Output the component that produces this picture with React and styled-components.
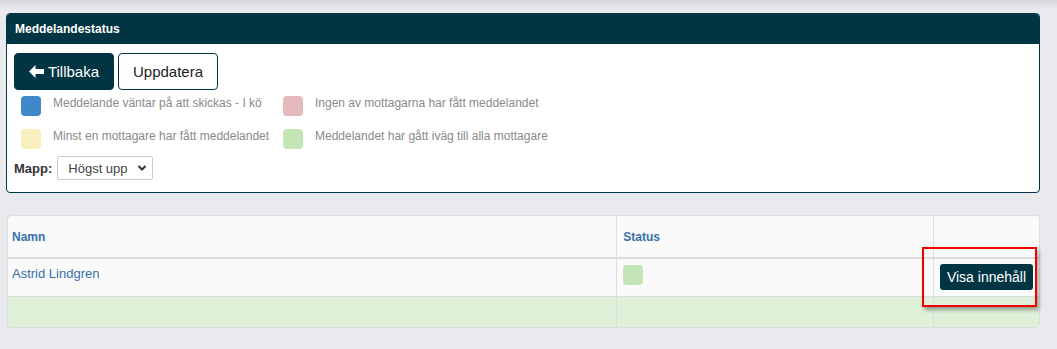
import React from 'react';
import styled, { createGlobalStyle } from 'styled-components';

const GlobalStyle = createGlobalStyle`
  body {
    margin: 0;
    background: linear-gradient(#d6d6d9, #e9eaee 10px) no-repeat, #e9eaee;
    font-family: "Liberation Sans", Arial, sans-serif;
  }
`;

const Page = styled.div`
  padding: 13px 17px 0 6px;
`;

const Panel = styled.section`
  border: 1px solid #023543;
  border-radius: 4px;
  background: #fff;
  overflow: hidden;
`;

const PanelHeader = styled.div`
  background: #023543;
  color: #fff;
  font-size: 12px;
  font-weight: bold;
  height: 30px;
  line-height: 30px;
  padding-left: 8px;
`;

const PanelBody = styled.div`
  padding: 9px 7px 12px;
`;

const Buttons = styled.div`
  display: flex;
  gap: 4px;
`;

const Button = styled.button`
  width: 100px;
  height: 37px;
  border-radius: 4px;
  font-family: inherit;
  font-size: 15px;
  display: flex;
  align-items: center;
  justify-content: center;
  gap: 4px;
  border: 1px solid #023543;
  background: ${({ $primary }) => ($primary ? '#023543' : '#fff')};
  color: ${({ $primary }) => ($primary ? '#fff' : '#222')};
  padding: 0;
`;

const Legend = styled.div`
  display: grid;
  grid-template-columns: 262px auto;
  row-gap: 13px;
  padding: 6px 0 0 7px;
`;

const LegendItem = styled.div`
  display: flex;
  align-items: flex-start;
  gap: 12px;
  font-size: 12px;
  color: #8a8a8a;
  line-height: 14px;
`;

const Swatch = styled.span`
  flex: none;
  display: block;
  width: 20px;
  height: 20px;
  border-radius: 4px;
  background: ${({ $color }) => $color};
`;

const FolderRow = styled.div`
  display: flex;
  align-items: center;
  gap: 5px;
  margin-top: 7px;
  font-size: 13px;
  font-weight: bold;
  color: #333;
`;

const SelectBox = styled.div`
  width: 96px;
  height: 24px;
  box-sizing: border-box;
  border: 1px solid #ccc;
  border-radius: 2px;
  display: flex;
  align-items: center;
  justify-content: space-between;
  padding: 0 5px 0 10px;
  font-size: 13px;
  font-weight: normal;
  color: #444;
`;

const TableWrap = styled.div`
  margin: 22px 0 0 1px;
  border: 1px solid #ddd;
  border-radius: 4px;
  background: #fafafa;
`;

const Table = styled.table`
  width: 100%;
  border-collapse: collapse;
  font-size: 13px;
`;

const Th = styled.th`
  text-align: left;
  color: #3871ab;
  font-size: 12px;
  font-weight: bold;
  height: 41px;
  padding: 0 5px 0 ${({ $first }) => ($first ? '4px' : '6px')};
  border-bottom: 2px solid #ddd;
  border-left: ${({ $first }) => ($first ? 'none' : '1px solid #ddd')};
  width: ${({ $w }) => $w};
`;

const Td = styled.td`
  vertical-align: top;
  padding: ${({ $pad }) => $pad || '5px 5px'};
  height: ${({ $h }) => $h};
  border-top: 1px solid #ddd;
  border-left: ${({ $first }) => ($first ? 'none' : '1px solid #ddd')};
  background: ${({ $bg }) => $bg || 'transparent'};
  color: #3871ab;
  position: relative;
`;

const Name = styled.span`
  display: block;
  margin-top: 1px;
`;

const ShowButton = styled.button`
  background: #023543;
  color: #fff;
  border: none;
  border-radius: 3px;
  font-family: inherit;
  font-size: 14px;
  height: 26px;
  width: 93px;
  padding: 0;
`;

const Highlight = styled.div`
  position: absolute;
  z-index: 2;
  left: -12px;
  top: -12px;
  width: 115px;
  height: 60px;
  box-sizing: border-box;
  border: 2px solid #e00;
  box-shadow: 2px 3px 4px rgba(0, 0, 0, 0.35);
  pointer-events: none;
`;

const ArrowLeft = () => (
  <svg width="15" height="13" viewBox="0 0 15 13" fill="currentColor">
    <path d="M0 6.5 L6.5 0 L6.5 4 L15 4 L15 9 L6.5 9 L6.5 13 Z" />
  </svg>
);

const Chevron = () => (
  <svg width="10" height="8" viewBox="0 0 10 8">
    <path d="M1.5 2 L5 5.5 L8.5 2" fill="none" stroke="#333" strokeWidth="2" />
  </svg>
);

const legend = [
  { color: '#3f88c9', text: 'Meddelande väntar på att skickas - I kö' },
  { color: '#e4b9bb', text: 'Ingen av mottagarna har fått meddelandet' },
  { color: '#f8efbc', text: 'Minst en mottagare har fått meddelandet' },
  { color: '#c4e6b6', text: 'Meddelandet har gått iväg till alla mottagare' },
];

export default function App() {
  return (
    <Page>
      <GlobalStyle />
      <Panel>
        <PanelHeader>Meddelandestatus</PanelHeader>
        <PanelBody>
          <Buttons>
            <Button $primary>
              <ArrowLeft />
              Tillbaka
            </Button>
            <Button>Uppdatera</Button>
          </Buttons>
          <Legend>
            {legend.map((item) => (
              <LegendItem key={item.text}>
                <Swatch $color={item.color} />
                {item.text}
              </LegendItem>
            ))}
          </Legend>
          <FolderRow>
            Mapp:
            <SelectBox>
              Högst upp
              <Chevron />
            </SelectBox>
          </FolderRow>
        </PanelBody>
      </Panel>

      <TableWrap>
        <Table>
          <thead>
            <tr>
              <Th $first $w="600px">Namn</Th>
              <Th $w="305px">Status</Th>
              <Th />
            </tr>
          </thead>
          <tbody>
            <tr>
              <Td $first $h="27px" $pad="6px 5px 4px 4px">
                <Name>Astrid Lindgren</Name>
              </Td>
              <Td $pad="6px 6px 4px">
                <Swatch $color="#c4e6b6" />
              </Td>
              <Td $pad="5px 6px">
                <ShowButton>Visa innehåll</ShowButton>
                <Highlight />
              </Td>
            </tr>
            <tr>
              <Td $first $h="30px" $pad="0" $bg="#dff0d8" />
              <Td $pad="0" $bg="#dff0d8" />
              <Td $pad="0" $bg="#dff0d8" />
            </tr>
          </tbody>
        </Table>
      </TableWrap>
    </Page>
  );
}
